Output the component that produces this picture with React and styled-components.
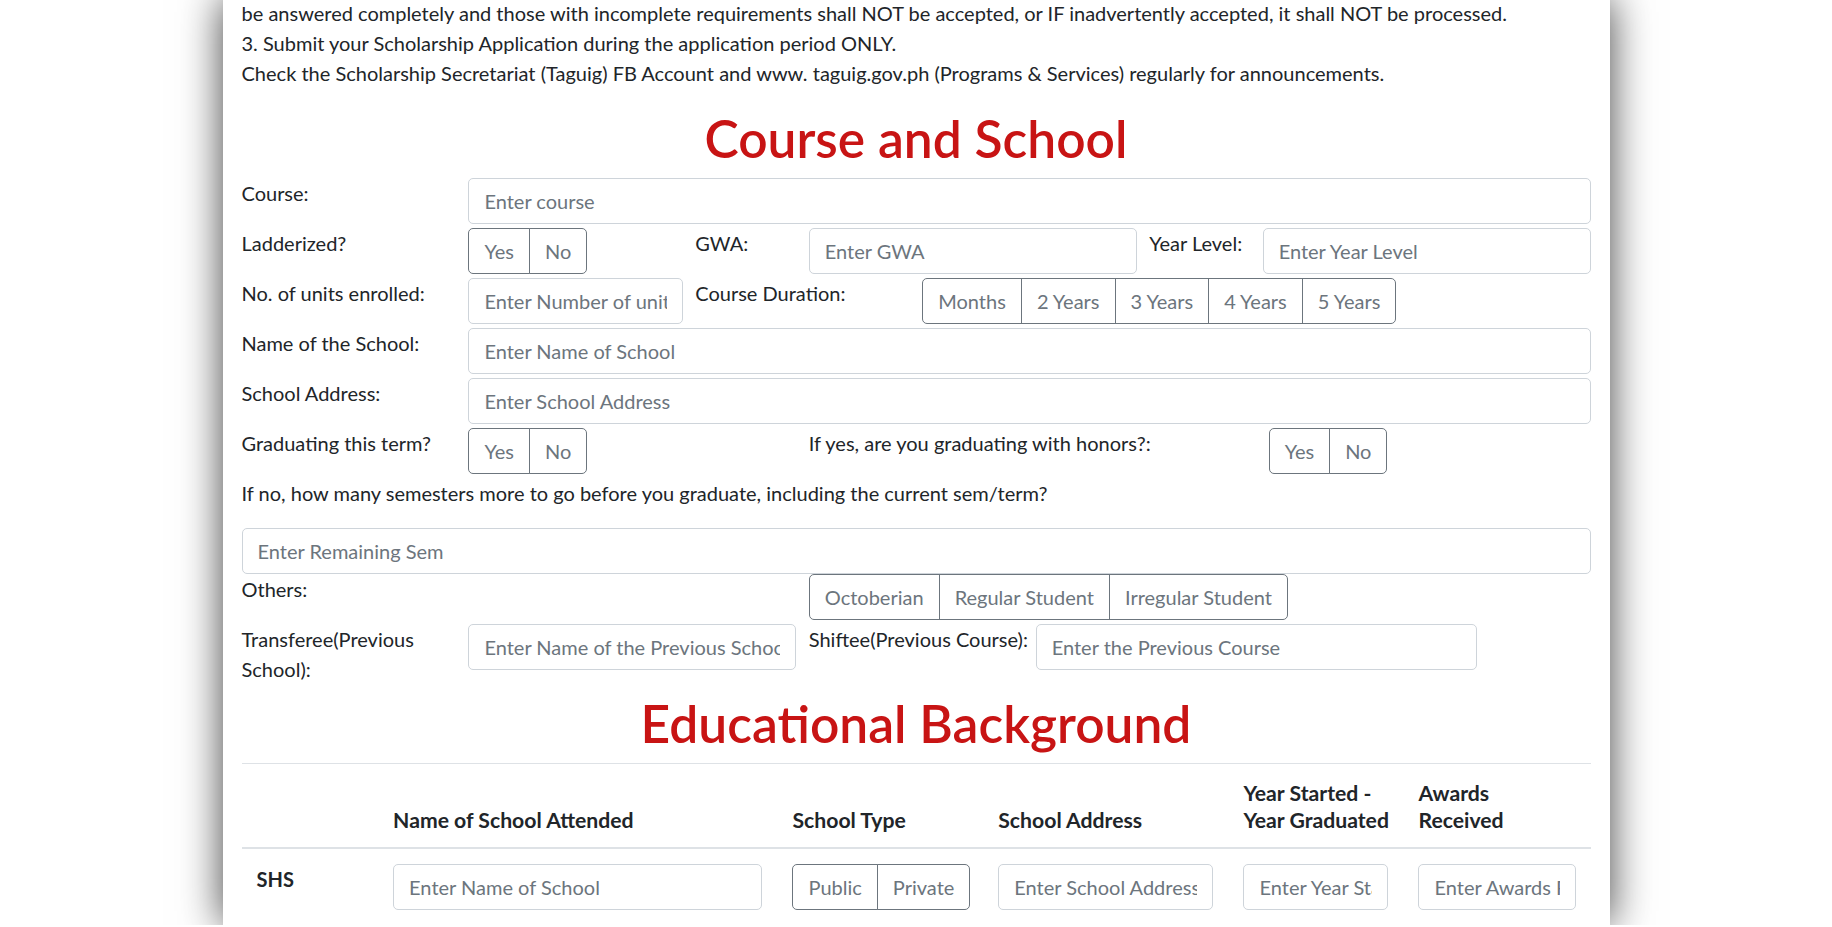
import React from 'react';
import styled, { createGlobalStyle } from 'styled-components';

const GlobalStyle = createGlobalStyle`
  * { box-sizing: border-box; }
  html, body {
    margin: 0;
    padding: 0;
    background: #fff;
    overflow: hidden;
  }
  body {
    font-family: "Segoe UI", Lato, "Liberation Sans", sans-serif;
    font-size: 20px;
    line-height: 1.5;
    color: #212529;
  }
`;

const Card = styled.main`
  width: 1387px;
  min-height: 100vh;
  margin: 0 auto;
  padding: 0 19px;
  background: #fff;
  box-shadow: 0 0 40px rgba(0, 0, 0, 0.75);
`;

// the page is scrolled: the notes start just above the top edge
const Notes = styled.div`
  margin: -2px 0 20px;
  line-height: 30px;
`;

const SectionTitle = styled.h1`
  margin: ${(p) => p.$top || 3}px 0 10px;
  font-size: 51.5px;
  font-weight: 600;
  line-height: 60px;
  color: #c81414;
  text-align: center;
`;

const FormRow = styled.div`
  display: grid;
  grid-template-columns: repeat(12, minmax(0, 1fr));
  column-gap: 12.5px;
  align-items: start;
  margin-bottom: ${(p) => (p.$flush ? 0 : 4)}px;
`;

const Label = styled.label`
  grid-column: ${(p) => p.$col};
  line-height: 30px;
  white-space: ${(p) => (p.$nowrap ? 'nowrap' : 'normal')};
`;

const Field = styled.input`
  grid-column: ${(p) => p.$col || 'auto'};
  display: block;
  width: 100%;
  height: 46px;
  padding: 0 15px;
  font: inherit;
  font-size: 20px;
  color: #495057;
  background: #fff;
  border: 1px solid #ced4da;
  border-radius: 5px;
  outline: none;

  &::placeholder {
    color: #6c757d;
    opacity: 1;
  }
`;

const ToggleGroup = styled.div`
  grid-column: ${(p) => p.$col || 'auto'};
  justify-self: start;
  display: inline-flex;
  margin-left: ${(p) => p.$indent || 0}px;
`;

const Toggle = styled.button`
  height: 46px;
  padding: 0 15px;
  font: inherit;
  font-size: 20px;
  line-height: 30px;
  color: #6c757d;
  background: transparent;
  border: 1px solid #6c757d;
  border-radius: 0;
  white-space: nowrap;
  cursor: pointer;

  & + & {
    margin-left: -1px;
  }
  &:first-child {
    border-radius: 5px 0 0 5px;
  }
  &:last-child {
    border-radius: 0 5px 5px 0;
  }
`;

const Question = styled.div`
  min-height: 46px;
  margin-bottom: 4px;
  line-height: 30px;
`;

const EduTable = styled.table`
  width: 100%;
  table-layout: fixed;
  border-collapse: collapse;
`;

const HeadCell = styled.th`
  padding: 16px 15px 14px;
  text-align: left;
  vertical-align: bottom;
  font-weight: 700;
  font-size: 21.2px;
  line-height: 26.7px;
  white-space: nowrap;
  border-top: 1px solid #dee2e6;
  border-bottom: 2px solid #dee2e6;
`;

const LevelCell = styled.th`
  padding: 15px;
  text-align: left;
  vertical-align: top;
  font-weight: 700;
  line-height: 30px;
`;

const Cell = styled.td`
  padding: 15px;
  vertical-align: top;
`;

const YesNo = ({ col, indent }) => (
  <ToggleGroup $col={col} $indent={indent}>
    <Toggle>Yes</Toggle>
    <Toggle>No</Toggle>
  </ToggleGroup>
);

const durations = ['Months', '2 Years', '3 Years', '4 Years', '5 Years'];
const studentTypes = ['Octoberian', 'Regular Student', 'Irregular Student'];
const colWidths = [136.6, 399.4, 205.8, 245.2, 175, 187];

export default function App() {
  return (
    <>
      <GlobalStyle />
      <Card>
        <Notes>
          <div>
            be answered completely and those with incomplete requirements shall NOT be accepted, or IF inadvertently
            accepted, it shall NOT be processed.
          </div>
          <div>3. Submit your Scholarship Application during the application period ONLY.</div>
          <div>
            Check the Scholarship Secretariat (Taguig) FB Account and www. taguig.gov.ph (Programs &amp; Services)
            regularly for announcements.
          </div>
        </Notes>

        <SectionTitle>Course and School</SectionTitle>

        <FormRow>
          <Label $col="1 / 3">Course:</Label>
          <Field $col="3 / 13" placeholder="Enter course" />
        </FormRow>

        <FormRow>
          <Label $col="1 / 3">Ladderized?</Label>
          <YesNo col="3 / 5" />
          <Label $col="5 / 6">GWA:</Label>
          <Field $col="6 / 9" placeholder="Enter GWA" />
          <Label $col="9 / 10" $nowrap>Year Level:</Label>
          <Field $col="10 / 13" placeholder="Enter Year Level" />
        </FormRow>

        <FormRow>
          <Label $col="1 / 3">No. of units enrolled:</Label>
          <Field $col="3 / 5" placeholder="Enter Number of units enrolled" />
          <Label $col="5 / 7">Course Duration:</Label>
          <ToggleGroup $col="7 / 13">
            {durations.map((d) => (
              <Toggle key={d}>{d}</Toggle>
            ))}
          </ToggleGroup>
        </FormRow>

        <FormRow>
          <Label $col="1 / 3">Name of the School:</Label>
          <Field $col="3 / 13" placeholder="Enter Name of School" />
        </FormRow>

        <FormRow>
          <Label $col="1 / 3">School Address:</Label>
          <Field $col="3 / 13" placeholder="Enter School Address" />
        </FormRow>

        <FormRow>
          <Label $col="1 / 3">Graduating this term?</Label>
          <YesNo col="3 / 5" />
          <Label $col="6 / 10">If yes, are you graduating with honors?:</Label>
          <YesNo col="10 / 13" indent={6} />
        </FormRow>

        <Question>If no, how many semesters more to go before you graduate, including the current sem/term?</Question>

        <FormRow $flush>
          <Field $col="1 / 13" placeholder="Enter Remaining Sem" />
        </FormRow>

        <FormRow>
          <Label $col="1 / 3">Others:</Label>
          <ToggleGroup $col="6 / 13">
            {studentTypes.map((t) => (
              <Toggle key={t}>{t}</Toggle>
            ))}
          </ToggleGroup>
        </FormRow>

        <FormRow>
          <Label $col="1 / 3">Transferee(Previous School):</Label>
          <Field $col="3 / 6" placeholder="Enter Name of the Previous School" />
          <Label $col="6 / 8" $nowrap>Shiftee(Previous Course):</Label>
          <Field $col="8 / 12" placeholder="Enter the Previous Course" />
        </FormRow>

        <SectionTitle $top={9}>Educational Background</SectionTitle>

        <EduTable>
          <colgroup>
            {colWidths.map((w, i) => (
              <col key={i} style={{ width: w }} />
            ))}
          </colgroup>
          <thead>
            <tr>
              <HeadCell />
              <HeadCell>Name of School Attended</HeadCell>
              <HeadCell>School Type</HeadCell>
              <HeadCell>School Address</HeadCell>
              <HeadCell>
                Year Started -<br />
                Year Graduated
              </HeadCell>
              <HeadCell>
                Awards
                <br />
                Received
              </HeadCell>
            </tr>
          </thead>
          <tbody>
            <tr>
              <LevelCell>SHS</LevelCell>
              <Cell>
                <Field placeholder="Enter Name of School" />
              </Cell>
              <Cell>
                <ToggleGroup>
                  <Toggle>Public</Toggle>
                  <Toggle>Private</Toggle>
                </ToggleGroup>
              </Cell>
              <Cell>
                <Field placeholder="Enter School Address" />
              </Cell>
              <Cell>
                <Field placeholder="Enter Year Started - Year Graduated" />
              </Cell>
              <Cell>
                <Field placeholder="Enter Awards Received" />
              </Cell>
            </tr>
          </tbody>
        </EduTable>
      </Card>
    </>
  );
}
